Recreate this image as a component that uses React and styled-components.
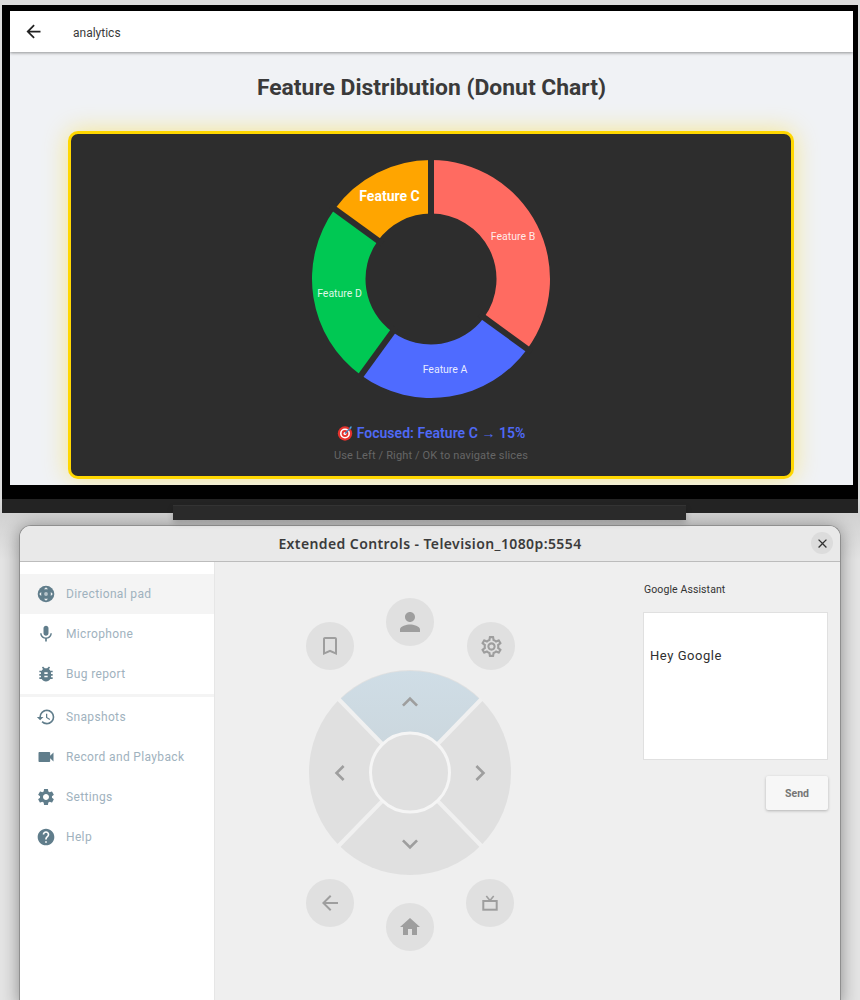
import React from "react";
import styled, { createGlobalStyle } from "styled-components";
import {
  MdArrowBack, MdMic, MdBugReport, MdHistory, MdVideocam, MdSettings, MdHelp,
  MdPerson, MdBookmarkBorder, MdOutlineSettings, MdHome, MdKeyboardArrowUp,
  MdKeyboardArrowDown, MdKeyboardArrowLeft, MdKeyboardArrowRight, MdClose,
} from "react-icons/md";

const Global = createGlobalStyle`
  html, body { margin: 0; padding: 0; background: #e6e6e4; }
  * { box-sizing: border-box; }
  body { font-family: Roboto, "Liberation Sans", sans-serif; overflow: hidden; }
`;

const Page = styled.div`
  width: 860px;
  height: 1000px;
  padding-top: 5px;
  overflow: hidden;
  background: linear-gradient(#dcdcdc 500px, #d2d2d2 515px, #e4e4e4 560px);
`;
const Monitor = styled.div`
  width: 856px;
  margin-left: 2px;
  background: #000;
  padding: 6px 5px 0 8px;
  position: relative;
  z-index: 1;
`;
const Screen = styled.div`
  width: 843px;
  height: 474px;
  background: #f0f2f5;
  overflow: hidden;
  display: flex;
  flex-direction: column;
  align-items: center;
`;
const TopBar = styled.header`
  width: 100%;
  height: 41px;
  flex: none;
  background: #fff;
  box-shadow: 0 1px 3px rgba(0, 0, 0, 0.4);
  display: flex;
  align-items: center;
  padding-left: 13px;
  color: #222;
  position: relative;
`;
const BarTitle = styled.span`
  margin-left: 29px;
  padding-top: 2px;
  font-size: 12px;
  color: #3a3a3a;
`;
const Heading = styled.h1`
  margin: 23px 0 0;
  height: 56px;
  flex: none;
  font-size: 22.9px;
  line-height: 26px;
  font-weight: 700;
  color: #3a3a3a;
  font-family: Roboto, sans-serif;
`;
const Card = styled.section`
  width: 726px;
  height: 348px;
  flex: none;
  margin-right: 1px;
  border: 3px solid #ffd700;
  border-radius: 10px;
  background: #2d2d2d;
  box-shadow: 0 0 24px rgba(255, 215, 0, 0.42);
  padding-top: 25px;
  display: flex;
  flex-direction: column;
  align-items: center;
`;
const Focused = styled.div`
  margin-top: 25px;
  height: 18px;
  flex: none;
  display: flex;
  align-items: center;
  gap: 4px;
  font-size: 14px;
  font-weight: 600;
  letter-spacing: 0.03px;
  color: #4f69f5;
`;
const Hint = styled.div`
  margin-top: 7px;
  font-size: 11px;
  line-height: 14px;
  letter-spacing: 0.15px;
  color: #666;
`;
const Chin = styled.div`
  height: 14px;
  margin: 14px -5px 0 -8px;
  background: #232323;
`;
const Stand = styled.div`
  width: 513px;
  height: 15px;
  margin: -8px 0 0 173px;
  position: relative;
  z-index: 2;
  background: #2a2a2a;
  border-top: 1px solid #333;
  box-shadow: 0 3px 6px rgba(0, 0, 0, 0.2);
`;
const Window = styled.div`
  width: 822px;
  height: 480px;
  margin: 5px 0 0 19px;
  background: #efefef;
  border: 1px solid #8f8f8f;
  border-bottom: 0;
  border-radius: 12px 12px 0 0;
  box-shadow: 0 2px 18px rgba(0, 0, 0, 0.4);
  display: flex;
  flex-direction: column;
  overflow: hidden;
`;
const TitleBar = styled.div`
  height: 36px;
  flex: none;
  background: #e9e9e9;
  border-bottom: 1px solid #bcbcbc;
  display: flex;
  align-items: center;
  justify-content: center;
  position: relative;
  font-family: "Noto Sans", sans-serif;
  font-size: 14px;
  letter-spacing: 0.4px;
  font-weight: 600;
  color: #3b3b3b;
`;
const CloseBtn = styled.div`
  position: absolute;
  right: 7px;
  top: 6px;
  width: 22px;
  height: 22px;
  border-radius: 50%;
  background: #dcdcdc;
  display: flex;
  align-items: center;
  justify-content: center;
  color: #333;
`;
const Body = styled.div`
  flex: 1;
  display: flex;
`;
const Sidebar = styled.nav`
  width: 195px;
  flex: none;
  background: #fff;
  padding-top: 12px;
  border-right: 1px solid #e6e6e6;
`;
const NavItem = styled.div`
  height: 40px;
  display: flex;
  align-items: center;
  padding-left: 16px;
  gap: 10px;
  background: ${(p) => (p.$active ? "#f4f4f4" : "transparent")};
  color: #9fb2be;
  font-size: 12px;
  letter-spacing: 0.35px;
  svg { color: #607d8b; flex: none; }
`;
const NavRule = styled.div`
  height: 3px;
  background: #f4f4f4;
`;
const Main = styled.div`
  flex: 1;
  display: flex;
  align-items: flex-start;
`;
const Remote = styled.div`
  position: relative;
  width: 210px;
  height: 360px;
  margin: 36px 0 0 90px;
  flex: none;
`;
const DpadArt = styled.svg`
  position: absolute;
  left: 4px;
  top: 72px;
`;
const RoundKey = styled.div`
  position: absolute;
  left: ${(p) => p.$x}px;
  top: ${(p) => p.$y}px;
  width: 48px;
  height: 48px;
  border-radius: 50%;
  background: #e0e0e0;
  color: #9e9e9e;
  display: flex;
  align-items: center;
  justify-content: center;
`;
const Arrow = styled.div`
  position: absolute;
  left: ${(p) => p.$x}px;
  top: ${(p) => p.$y}px;
  color: #9e9e9e;
  display: flex;
`;
const Assistant = styled.div`
  width: 185px;
  margin: 21px 0 0 128px;
  flex: none;
  display: flex;
  flex-direction: column;
  align-items: flex-end;
`;
const AssistantLabel = styled.div`
  align-self: flex-start;
  margin-left: 1px;
  font-size: 10.5px;
  line-height: 13px;
  color: #333;
  letter-spacing: 0.1px;
`;
const Prompt = styled.div`
  width: 100%;
  height: 148px;
  margin-top: 16px;
  background: #fff;
  border: 1px solid #e0e0e0;
  padding: 34px 6px 0;
  font-size: 13px;
  line-height: 18px;
  letter-spacing: 0.55px;
  color: #2f2f2f;
`;
const SendBtn = styled.div`
  width: 62px;
  height: 34px;
  margin-top: 16px;
  background: #f7f7f7;
  border-radius: 2px;
  box-shadow: 0 1px 3px rgba(0, 0, 0, 0.25);
  display: flex;
  align-items: center;
  justify-content: center;
  font-size: 10.5px;
  font-weight: 700;
  color: #757575;
`;

const CX = 120, CY = 120, R = 119, r = 65.5;
const pt = (rad, deg) => {
  const a = ((deg - 90) * Math.PI) / 180;
  return [CX + rad * Math.cos(a), CY + rad * Math.sin(a)];
};
const slicePath = (a, b) => {
  const [x1, y1] = pt(R, a), [x2, y2] = pt(R, b), [x3, y3] = pt(r, b), [x4, y4] = pt(r, a);
  const large = b - a > 180 ? 1 : 0;
  return `M${x1} ${y1}A${R} ${R} 0 ${large} 1 ${x2} ${y2}L${x3} ${y3}A${r} ${r} 0 ${large} 0 ${x4} ${y4}Z`;
};
const slices = [
  { from: 0, to: 126, color: "#ff6b61" },
  { from: 126, to: 216, color: "#4f6bff" },
  { from: 216, to: 306, color: "#00c853" },
  { from: 306, to: 360, color: "#ffa500" },
];
const labels = [
  { text: "Feature B", x: 202, y: 78 },
  { text: "Feature A", x: 134, y: 211 },
  { text: "Feature D", x: 28.5, y: 135 },
];

function Donut() {
  return (
    <svg width="240" height="240" viewBox="0 0 240 240" style={{ flex: "none" }}>
      {slices.map((s) => <path key={s.from} d={slicePath(s.from, s.to)} fill={s.color} />)}
      {slices.map((s) => {
        const [x1, y1] = pt(60, s.from), [x2, y2] = pt(124, s.from);
        return <line key={s.from} x1={x1} y1={y1} x2={x2} y2={y2} stroke="#2d2d2d" strokeWidth="6" />;
      })}
      {labels.map((l) => (
        <text key={l.text} x={l.x} y={l.y} textAnchor="middle" dominantBaseline="middle"
          fontFamily="Roboto, sans-serif" fontSize="10.5" fill="#fff" fillOpacity="0.88">{l.text}</text>
      ))}
      <text x="78.5" y="38" textAnchor="middle" dominantBaseline="middle"
        fontFamily="Roboto, sans-serif" fontSize="14" fontWeight="700" fill="#fff">Feature C</text>
    </svg>
  );
}

function Dart() {
  return (
    <svg width="16" height="16" viewBox="0 0 16 16">
      <circle cx="8" cy="8.5" r="7.2" fill="#e5322d" />
      <circle cx="8" cy="8.5" r="5" fill="#fff" />
      <circle cx="8" cy="8.5" r="3.4" fill="#e5322d" />
      <circle cx="8" cy="8.5" r="1.5" fill="#fff" />
      <path d="M8 8.5 13.5 3" stroke="#3f7fb5" strokeWidth="1.3" />
      <path d="M12.5 2.2 14.4 1l.2 2-1.4 1z" fill="#4aa3df" />
    </svg>
  );
}

function DpadNavIcon() {
  return (
    <svg width="20" height="20" viewBox="0 0 20 20">
      <circle cx="10" cy="10" r="8.3" fill="currentColor" />
      <circle cx="10" cy="10" r="1.9" fill="#fff" fillOpacity="0.55" />
      <path d="M8 5.2h4L10 3.2zM8 14.8h4L10 16.8zM5.2 8v4L3.2 10zM14.8 8v4L16.8 10z" fill="#fff" fillOpacity="0.9" />
    </svg>
  );
}

function TvIcon() {
  return (
    <svg width="20" height="20" viewBox="0 0 20 20" fill="none" stroke="currentColor">
      <rect x="3.3" y="8" width="13.4" height="8.7" strokeWidth="2" />
      <path d="M6.3 3l3.7 4.4L13.7 3" strokeWidth="1.6" />
    </svg>
  );
}

function Dpad() {
  const cx = 101, cy = 102.5, kx = 70.5, ky = 72.5;
  return (
    <DpadArt width="202" height="205" viewBox="0 0 202 205">
      <defs>
        <linearGradient id="upKey" x1="0" y1="0" x2="0" y2="1">
          <stop offset="0" stopColor="#cfdde6" />
          <stop offset="1" stopColor="#cad5db" />
        </linearGradient>
      </defs>
      <ellipse cx={cx} cy={cy} rx="101" ry="102.5" fill="#e0e0e0" />
      <path d={`M${cx} ${cy}L${cx - kx} ${cy - ky}A101 102.5 0 0 1 ${cx + kx} ${cy - ky}Z`} fill="url(#upKey)" />
      <path d={`M${cx - kx - 1} ${cy - ky - 1}L${cx + kx + 1} ${cy + ky + 1}M${cx + kx + 1} ${cy - ky - 1}L${cx - kx - 1} ${cy + ky + 1}`} stroke="#f0f0f0" strokeWidth="4" />
      <circle cx={cx} cy={cy} r="39.5" fill="#e0e0e0" stroke="#f5f5f5" strokeWidth="3" />
    </DpadArt>
  );
}

const navTop = [
  { label: "Directional pad", icon: <DpadNavIcon />, active: true },
  { label: "Microphone", icon: <MdMic size={20} /> },
  { label: "Bug report", icon: <MdBugReport size={20} /> },
];
const navBottom = [
  { label: "Snapshots", icon: <MdHistory size={20} /> },
  { label: "Record and Playback", icon: <MdVideocam size={20} /> },
  { label: "Settings", icon: <MdSettings size={20} /> },
  { label: "Help", icon: <MdHelp size={20} /> },
];

export default function App() {
  return (
    <Page>
      <Global />
      <Monitor>
        <Screen>
          <TopBar>
            <MdArrowBack size={21} />
            <BarTitle>analytics</BarTitle>
          </TopBar>
          <Heading>Feature Distribution (Donut Chart)</Heading>
          <Card>
            <Donut />
            <Focused><Dart />Focused: Feature C → 15%</Focused>
            <Hint>Use Left / Right / OK to navigate slices</Hint>
          </Card>
        </Screen>
        <Chin />
      </Monitor>
      <Stand />
      <Window>
        <TitleBar>
          Extended Controls - Television_1080p:5554
          <CloseBtn><MdClose size={15} /></CloseBtn>
        </TitleBar>
        <Body>
          <Sidebar>
            {navTop.map((n) => (
              <NavItem key={n.label} $active={n.active}>{n.icon}{n.label}</NavItem>
            ))}
            <NavRule />
            {navBottom.map((n) => (
              <NavItem key={n.label}>{n.icon}{n.label}</NavItem>
            ))}
          </Sidebar>
          <Main>
            <Remote>
              <RoundKey $x={81} $y={0}><MdPerson size={30} /></RoundKey>
              <RoundKey $x={1} $y={24}><MdBookmarkBorder size={24} /></RoundKey>
              <RoundKey $x={162} $y={24}><MdOutlineSettings size={25} /></RoundKey>
              <Dpad />
              <Arrow $x={89} $y={88}><MdKeyboardArrowUp size={32} /></Arrow>
              <Arrow $x={19} $y={159}><MdKeyboardArrowLeft size={32} /></Arrow>
              <Arrow $x={159} $y={159}><MdKeyboardArrowRight size={32} /></Arrow>
              <Arrow $x={89} $y={230}><MdKeyboardArrowDown size={32} /></Arrow>
              <RoundKey $x={1} $y={281}><MdArrowBack size={24} /></RoundKey>
              <RoundKey $x={161} $y={281}><TvIcon /></RoundKey>
              <RoundKey $x={81} $y={305}><MdHome size={24} /></RoundKey>
            </Remote>
            <Assistant>
              <AssistantLabel>Google Assistant</AssistantLabel>
              <Prompt>Hey Google</Prompt>
              <SendBtn>Send</SendBtn>
            </Assistant>
          </Main>
        </Body>
      </Window>
    </Page>
  );
}
